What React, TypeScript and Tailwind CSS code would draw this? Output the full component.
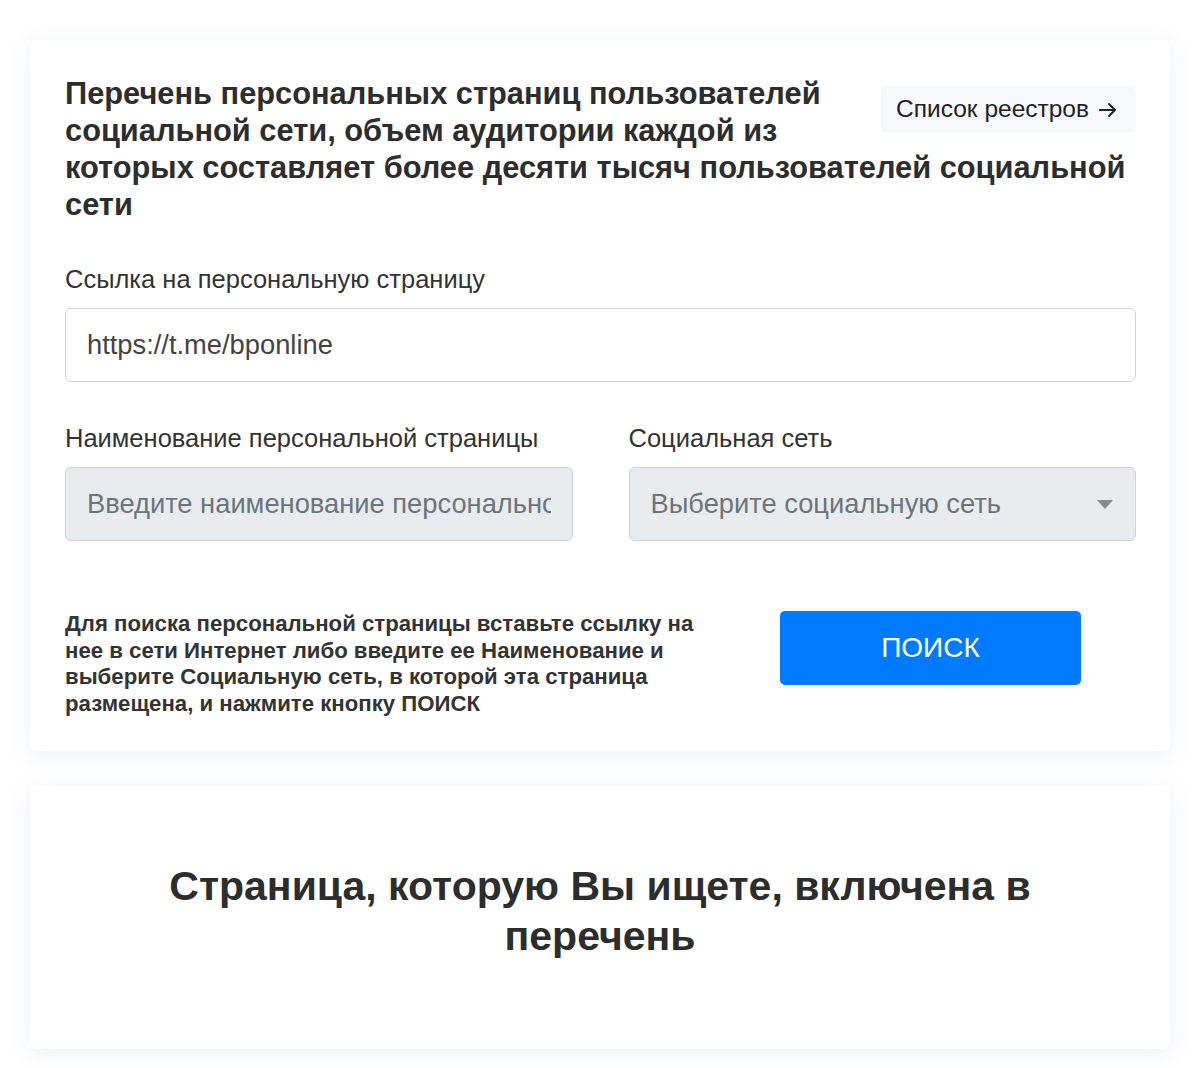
import React from "react";

export default function App() {
  return (
    <div className="min-h-[1068px] bg-white pt-[40px] pb-[20px] px-[30px] text-[#333]" style={{ fontFamily: '"Liberation Sans", Arial, sans-serif' }}>
      <div className="bg-white rounded-[6px] shadow-[0_4px_24px_rgba(90,110,170,0.11)] pl-[35px] pr-[34px] pt-[35px] pb-[34px]">
        <div className="flow-root">
          <button className="float-right ml-[40px] mt-[11px] h-[47px] pl-[15px] pr-[18px] rounded-[6px] bg-[#f7f8fa] text-[24.5px] text-[#222] flex items-center gap-[9px]">
            <span>Список реестров</span>
            <svg width="20" height="20" viewBox="0 0 20 20" fill="none" stroke="#222" strokeWidth="1.9" strokeLinecap="round" strokeLinejoin="round">
              <path d="M2 10h15M11 4l6 6-6 6" />
            </svg>
          </button>
          <h1 className="text-[30.8px] leading-[37px] font-bold text-[#2d2d2d]">
            Перечень персональных страниц пользователей социальной сети, объем аудитории каждой из которых составляет более десяти тысяч пользователей социальной сети
          </h1>
        </div>

        <div className="mt-[41px]">
          <label className="block text-[25.5px] leading-[30px] text-[#333]">Ссылка на персональную страницу</label>
          <div className="mt-[14px] h-[74px] rounded-[6px] border border-[#cfd3d8] bg-white flex items-center px-[21px] text-[27.3px] text-[#444]">
            https://t.me/bponline
          </div>
        </div>

        <div className="mt-[41px] grid grid-cols-2 gap-[56px]">
          <div>
            <label className="block text-[25.5px] leading-[30px] text-[#333]">Наименование персональной страницы</label>
            <div className="mt-[14px] h-[74px] rounded-[6px] border border-[#cfd3d8] bg-[#e9ecef] flex items-center px-[21px] text-[27.3px] text-[#6c757d] overflow-hidden whitespace-nowrap">
              <span className="block overflow-hidden w-full">Введите наименование персональной страницы</span>
            </div>
          </div>
          <div>
            <label className="block text-[25.5px] leading-[30px] text-[#333]">Социальная сеть</label>
            <div className="mt-[14px] h-[74px] rounded-[6px] border border-[#cfd3d8] bg-[#e9ecef] flex items-center justify-between pl-[21px] pr-[22px] text-[27.3px] text-[#6c757d]">
              <span>Выберите социальную сеть</span>
              <svg width="16" height="9" viewBox="0 0 16 9" className="shrink-0">
                <path d="M0 0h16L8 9z" fill="#8a8a8a" />
              </svg>
            </div>
          </div>
        </div>

        <div className="mt-[70px] flex items-start">
          <p className="w-[662px] text-[22.2px] leading-[26.5px] font-bold text-[#333]">
            Для поиска персональной страницы вставьте ссылку на нее в сети Интернет либо введите ее Наименование и выберите Социальную сеть, в которой эта страница размещена, и нажмите кнопку ПОИСК
          </p>
          <button className="ml-[53px] w-[301px] h-[74px] rounded-[5px] bg-[#007bff] text-white text-[28px] flex items-center justify-center">
            ПОИСК
          </button>
        </div>
      </div>

      <div className="mt-[35px] bg-white rounded-[6px] shadow-[0_4px_24px_rgba(90,110,170,0.11)] pt-[75px] pb-[88px] px-[35px]">
        <h2 className="mx-auto max-w-[900px] text-center text-[41px] leading-[50px] font-bold text-[#2d2d2d]">
          Страница, которую Вы ищете, включена в перечень
        </h2>
      </div>
    </div>
  );
}
